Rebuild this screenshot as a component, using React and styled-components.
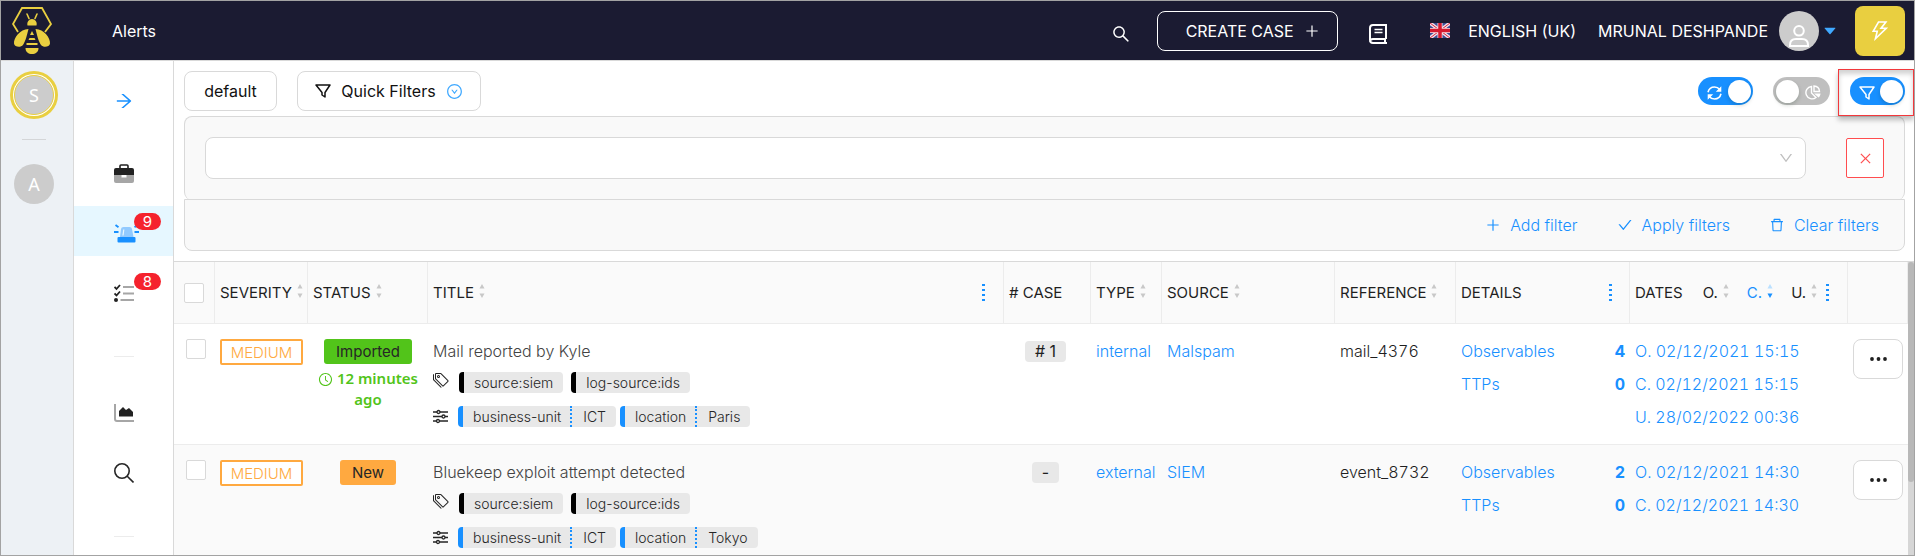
import React from "react";
import styled, { createGlobalStyle, css } from "styled-components";
import {
  AiOutlineSearch,
  AiOutlinePlus,
  AiOutlineThunderbolt,
  AiOutlineArrowRight,
  AiOutlineDownCircle,
  AiOutlineDown,
  AiOutlineClose,
  AiOutlineCheck,
  AiOutlineDelete,
  AiOutlineClockCircle,
  AiFillCaretDown,
} from "react-icons/ai";
import { BsTags } from "react-icons/bs";

const c = {
  navy: "#1b1b32",
  blue: "#1890ff",
  line: "#d9d9d9",
  soft: "#ececec",
  yellow: "#e9cf40",
  orange: "#ffa940",
  green: "#52c41a",
  red: "#ff4d4f",
  ink: "#1f1f1f",
  pale: "#fafafa",
};

const GlobalStyle = createGlobalStyle`
  *, *::before, *::after { box-sizing: border-box; }
  body { margin: 0; background: #fff; }
  body, button, select, input {
    font-family: Inter, "Liberation Sans", sans-serif;
    font-size: 16px;
    color: ${c.ink};
  }
  button { background: none; border: 0; padding: 0; cursor: pointer; }
  a { text-decoration: none; color: ${c.blue}; }
  svg { display: block; flex: none; }
`;

/* ---------- shell ---------- */

const Page = styled.div`
  height: 100vh;
  border: 1px solid #a3a3a3;
  display: flex;
  flex-direction: column;
  overflow: hidden;
`;

const Header = styled.header`
  flex: none;
  height: 60px;
  background: ${c.navy};
  border-bottom: 1px solid ${c.line};
  display: flex;
  align-items: center;
  padding: 0 9px 0 11px;
  color: #fff;
`;

const PageTitle = styled.h1`
  margin: 0 auto 0 60px;
  font-size: 16px;
  font-weight: 400;
`;

const IconButton = styled.button`
  color: #fff;
  display: flex;
  padding-top: 6px;
`;

const CreateCase = styled.button`
  width: 181px;
  height: 40px;
  margin: 0 31px 0 26px;
  border: 1px solid #fff;
  border-radius: 8px;
  color: #fff;
  display: flex;
  align-items: center;
  justify-content: center;
  gap: 10px;
  padding-left: 10px;
`;

const Language = styled.button`
  color: #fff;
  display: flex;
  align-items: center;
  gap: 18px;
  margin: 0 22px 0 43px;
`;

const UserMenu = styled.button`
  color: #fff;
  display: flex;
  align-items: center;
`;

const UserAvatar = styled.span`
  width: 40px;
  height: 40px;
  margin: 0 3px 0 11px;
  border-radius: 50%;
  background: #ccc;
  display: flex;
  align-items: flex-end;
  justify-content: center;
  padding-bottom: 4px;
`;

const BoltButton = styled.button`
  width: 50px;
  height: 50px;
  margin-left: 17px;
  border-radius: 8px;
  background: ${c.yellow};
  color: #fff;
  display: flex;
  align-items: center;
  justify-content: center;
`;

const Body = styled.div`
  flex: 1;
  min-height: 0;
  display: flex;
`;

const OrgRail = styled.aside`
  flex: none;
  width: 73px;
  background: #edf1f5;
  border-right: 1px solid ${c.line};
  padding: 10px 6px 0 0;
  display: flex;
  flex-direction: column;
  align-items: center;
`;

const Avatar = styled.button`
  width: 40px;
  height: 40px;
  border-radius: 50%;
  background: #ccc;
  color: #fff;
  font-family: "Noto Sans", sans-serif;
  font-size: 18px;
  ${(p) =>
    p.$active &&
    css`
      margin: 4px 0;
      border: 1px solid ${c.yellow};
      box-shadow: 0 0 0 1px #fff, 0 0 0 4px ${c.yellow};
    `}
`;

const Divider = styled.hr`
  flex: none;
  width: ${(p) => p.$width}px;
  height: 1px;
  border: 0;
  background: ${(p) => p.$color};
  margin: ${(p) => p.$margin};
`;

const NavRail = styled.nav`
  flex: none;
  width: 100px;
  border-right: 1px solid ${c.line};
  display: flex;
  flex-direction: column;
`;

const Expand = styled.button`
  flex: none;
  color: ${c.blue};
  display: flex;
  padding: 30px 0 35px 40px;
`;

const NavItem = styled.a`
  flex: none;
  position: relative;
  height: 50px;
  margin-bottom: 10px;
  padding: 4px 0 0 40px;
  display: flex;
  align-items: center;
  background: ${(p) => (p.$active ? "#e6f7ff" : "transparent")};
  color: ${(p) => (p.$active ? c.blue : "#262626")};
`;

const Badge = styled.span`
  position: absolute;
  top: 7px;
  left: 60px;
  width: 27px;
  height: 17px;
  border-radius: 9px;
  background: #f5222d;
  color: #fff;
  font-size: 15px;
  line-height: 17px;
  text-align: center;
`;

const Main = styled.main`
  flex: 1;
  min-width: 0;
  display: flex;
  flex-direction: column;
`;

/* ---------- toolbar and filters ---------- */

const Toolbar = styled.div`
  flex: none;
  display: flex;
  align-items: center;
  gap: 20px;
  padding: 10px 9px 5px 10px;
`;

const OutlineButton = styled.button`
  width: ${(p) => p.$width}px;
  height: 40px;
  border: 1px solid ${c.line};
  border-radius: 8px;
  background: #fff;
  color: #111;
  display: flex;
  align-items: center;
  justify-content: center;
  gap: 10px;
`;

const Spacer = styled.div`
  flex: 1;
`;

const SwitchLabel = styled.label`
  position: relative;
  width: ${(p) => (p.$on ? 55 : 57)}px;
  height: 28px;
  border-radius: 14px;
  background: ${(p) => (p.$on ? c.blue : "#bfbfbf")};
  color: #fff;
  display: flex;
  align-items: center;
  justify-content: space-between;
  flex-direction: ${(p) => (p.$on ? "row" : "row-reverse")};
  padding: ${(p) => (p.$on ? "0 2px 0 9px" : "0 9px 0 3px")};
  cursor: pointer;
  > svg {
    margin-top: 3px;
  }
`;

const SwitchInput = styled.input`
  appearance: none;
  margin: 0;
  width: 23px;
  height: 23px;
  border-radius: 50%;
  background: #fff;
  box-shadow: 0 2px 4px rgba(0, 35, 11, 0.2);
`;

const Highlight = styled.span`
  position: absolute;
  inset: -8px -9px -11px -12px;
  border: 1px solid #f2383c;
  box-shadow: 0 4px 5px rgba(0, 0, 0, 0.25), inset 0 4px 5px rgba(0, 0, 0, 0.18);
  pointer-events: none;
`;

const FilterPanel = styled.section`
  flex: none;
  height: 84px;
  margin: 0 9px 0 10px;
  border: 1px solid ${c.line};
  border-bottom: 0;
  border-radius: 8px;
  background: #f9f9f9;
  display: flex;
  align-items: center;
  gap: 40px;
  padding: 0 20px 1px;
`;

const SelectBox = styled.div`
  flex: 1;
  display: grid;
  align-items: center;
  color: #bfbfbf;
  > * {
    grid-area: 1 / 1;
  }
  > svg {
    justify-self: end;
    margin-right: 12px;
    pointer-events: none;
  }
`;

const Select = styled.select`
  appearance: none;
  width: 100%;
  height: 42px;
  border: 1px solid ${c.line};
  border-radius: 8px;
  background: #fff;
  padding: 0 40px 0 12px;
`;

const RemoveButton = styled.button`
  width: 38px;
  height: 40px;
  border: 1px solid ${c.red};
  border-radius: 2px;
  background: #fff;
  color: ${c.red};
  display: flex;
  align-items: center;
  justify-content: center;
`;

const FilterActions = styled.div`
  flex: none;
  height: 52px;
  margin: -1px 9px 10px 10px;
  border: 1px solid ${c.line};
  border-radius: 0 0 8px 8px;
  background: #f9f9f9;
  display: flex;
  align-items: center;
  justify-content: flex-end;
  gap: 39px;
  padding-right: 25px;
`;

const TextButton = styled.button`
  color: ${c.blue};
  font-weight: 300;
  display: flex;
  align-items: center;
  gap: 9px;
`;

/* ---------- table ---------- */

const TableArea = styled.div`
  flex: 1;
  min-height: 0;
  display: flex;
  align-items: stretch;
  border-top: 1px solid ${c.line};
`;

const TableClip = styled.div`
  flex: 1;
  min-width: 0;
  overflow: hidden;
`;

const ScrollTrack = styled.div`
  flex: none;
  width: 6px;
  background: #d6d6d6;
`;

const ScrollThumb = styled.div`
  height: 75%;
  border-radius: 3px;
  background: #b8b8b8;
`;

const Table = styled.table`
  width: 100%;
  table-layout: fixed;
  border-collapse: separate;
  border-spacing: 0;
`;

const Col = styled.col`
  width: ${(p) => (p.$width ? `${p.$width}px` : "auto")};
`;

const Th = styled.th`
  height: 62px;
  padding: 0 5px;
  background: ${c.pale};
  border-right: 1px solid ${c.soft};
  border-bottom: 1px solid ${c.soft};
  font-size: 15px;
  font-weight: 400;
  text-align: left;
  white-space: nowrap;
`;

const HeadRow = styled.div`
  display: flex;
  align-items: center;
  gap: 5px;
  padding-right: ${(p) => p.$right || 0}px;
  > :last-child {
    margin-left: ${(p) => (p.$spread ? "auto" : "0")};
  }
`;

const SortKeys = styled.div`
  display: flex;
  gap: 18px;
  margin-left: 15px;
`;

const SortKey = styled.button`
  display: flex;
  align-items: center;
  gap: 5px;
  font-size: 15px;
  color: ${(p) => (p.$active ? c.blue : c.ink)};
`;

const Row = styled.tr`
  background: ${(p) => (p.$odd ? c.pale : "#fff")};
`;

const Td = styled.td`
  height: 121px;
  padding: 15px 5px 0;
  vertical-align: top;
  border-bottom: 1px solid ${c.soft};
  text-align: ${(p) => p.$align || "left"};
  white-space: nowrap;
`;

const Checkbox = styled.input`
  appearance: none;
  display: block;
  width: 20px;
  height: 20px;
  margin: 0 0 0 ${(p) => (p.$head ? 5 : 7)}px;
  border: 1px solid ${c.line};
  border-radius: 2px;
  background: #fff;
`;

const Severity = styled.span`
  display: flex;
  align-items: center;
  justify-content: center;
  height: 26px;
  width: 83px;
  border: 2px solid ${c.orange};
  border-radius: 2px;
  color: ${c.orange};
  background: #fff;
  font-size: 15px;
  font-weight: 300;
`;

const StatusCell = styled.div`
  display: flex;
  flex-direction: column;
  align-items: center;
  gap: 4px;
`;

const Status = styled.span`
  height: 25px;
  line-height: 25px;
  padding: 0 12px;
  border-radius: 3px;
  background: ${(p) => (p.$imported ? c.green : c.orange)};
  font-size: 15px;
  color: #262626;
`;

const Ago = styled.span`
  color: ${c.green};
  font-family: "Noto Sans", sans-serif;
  font-size: 15px;
  line-height: 21px;
  font-weight: 600;
  text-align: center;
  white-space: normal;
  svg {
    display: inline-block;
    vertical-align: -3px;
  }
`;

const Line = styled.div`
  height: 33px;
  line-height: 25px;
  font-weight: 300;
  font-variant-numeric: tabular-nums;
  display: flex;
  justify-content: space-between;
  color: ${(p) => p.$color || c.blue};
  b {
    font-weight: 700;
  }
`;

const Title = styled.a`
  display: block;
  line-height: 25px;
  margin-bottom: 8px;
  font-weight: 300;
  color: #434343;
`;

const TagRow = styled.div`
  display: flex;
  align-items: flex-start;
  gap: ${(p) => p.$gap}px;
  height: 34px;
  > svg {
    margin-right: ${(p) => 10 - p.$gap}px;
  }
`;

const Tag = styled.span`
  display: inline-flex;
  height: 21px;
  line-height: 21px;
  border-left: 5px solid ${(p) => p.$color};
  border-radius: 4px;
  background: #e8e8e8;
  font-size: 14px;
  font-weight: 300;
  color: #262626;
  padding: 0 10px;
`;

const TagName = styled.span`
  padding-right: 9px;
  margin-right: 11px;
  border-right: 2px dotted ${c.blue};
`;

const CaseTag = styled.span`
  display: inline-block;
  height: 21px;
  line-height: 21px;
  margin: 2px 4px 0 0;
  padding: 0 10px;
  border-radius: 4px;
  background: #e8e8e8;
`;

const MoreButton = styled.button`
  width: 50px;
  height: 40px;
  border: 1px solid ${c.line};
  border-radius: 8px;
  background: #fff;
  display: flex;
  align-items: center;
  justify-content: center;
`;

/* ---------- drawings ---------- */

const Logo = () => (
  <svg width="40" height="48" viewBox="0 0 40 48" fill={c.yellow} role="img" aria-label="TheHive">
    <path d="M6 25L1 17 10 1h20l9 16-6 8" fill="none" stroke={c.yellow} strokeWidth="1.800" />
    <path d="M15 7l2 4.500M25 7l-2 4.500" stroke={c.yellow} strokeWidth="1.600" strokeLinecap="round" />
    <path d="M15.500 18.500C14.500 15 17 12 20 12s5.500 3 4.500 6.500z" />
    <path d="M16.500 22C8 22 1.500 31 2 36.500c.5 3.500 6.500 4.500 9 1.500 2.500-3.500 4-10 5.500-16zM23.500 22c8.500 0 15 9 14.500 14.500-.5 3.500-6.500 4.500-9 1.500-2.500-3.500-4-10-5.500-16z" />
    <path d="M20 24l2 4h-4zM17.500 31h5l1 2h-7zM14.500 36h11v2h-11zM13.500 41h13c0 4-3 6-6.500 6s-6.500-2-6.500-6z" />
  </svg>
);

const Book = () => (
  <svg width="18" height="20" viewBox="0 0 18 20" fill="none" stroke="#fff" strokeWidth="2">
    <path d="M17 15V1H4Q1 1 1 4v12q0 3 3 3h14M1 17.500q0-2.500 3-2.500h13M16 15v4" />
    <path d="M5.500 5.500h8M5.500 8.500h8" strokeWidth="1.700" />
  </svg>
);

const Flag = () => (
  <svg width="20" height="15" viewBox="0 0 20 15" aria-hidden="true">
    <path fill="#3d4d95" d="M0 0h20v15H0z" />
    <path d="M0 0l20 15M20 0L0 15" stroke="#f4dfe6" strokeWidth="3.500" />
    <path d="M0 0l20 15M20 0L0 15" stroke="#d5243f" strokeWidth="1" />
    <path d="M10 0v15M0 7.500h20" stroke="#f4dfe6" strokeWidth="5" />
    <path d="M10 0v15M0 7.500h20" stroke="#d5182f" strokeWidth="3.500" />
  </svg>
);

const Person = () => (
  <svg width="20" height="22" viewBox="0 0 20 22" fill="none" stroke="#fff" strokeWidth="2">
    <circle cx="10" cy="5.800" r="4.800" />
    <path d="M1 21v-1q0-6 6-6h6q6 0 6 6v1z" />
  </svg>
);

const Funnel = () => (
  <svg width="16" height="14" viewBox="0 0 16 14" fill="none" stroke="currentColor" strokeWidth="1.500" strokeLinejoin="round">
    <path d="M1 1h14l-5 7.500V13l-3-2V8.500z" />
  </svg>
);

const Refresh = () => (
  <svg width="15" height="14" viewBox="0 0 15 14" fill="none" stroke="currentColor" strokeWidth="1.600">
    <path d="M1 6.200C1.800 3 4.500 1 7.500 1c2.200 0 4 1 5.200 2.600M14 7.800C13.200 11 10.500 13 7.500 13c-2.200 0-4-1-5.200-2.600" />
    <path d="M14.300.3v5.500H8.800zM.7 13.700V8.200h5.500z" fill="currentColor" stroke="none" />
  </svg>
);

const PieChart = () => (
  <svg width="16" height="15" viewBox="0 0 16 15" fill="none" stroke="currentColor" strokeWidth="1.400">
    <path d="M6.500 1.500A6.200 6.200 0 1 0 11 12.500L6.500 8z" />
    <path d="M9 1v5.500h5.500C14.300 3.500 12 1.200 9 1z" />
    <path d="M9 8.500h6.500c0 1.500-.8 3-2 4z" fill="currentColor" stroke="none" />
  </svg>
);

const Briefcase = () => (
  <svg width="20" height="19" viewBox="0 0 20 19">
    <path d="M6 4V2q0-1 1-1h6q1 0 1 1v2" fill="none" stroke="#222" strokeWidth="1.600" />
    <path d="M0 6q0-2 2-2h16q2 0 2 2v5H0z" fill="#222" />
    <path d="M0 11h20v6q0 2-2 2H2q-2 0-2-2z" fill="#a6a6a6" />
    <path d="M7.500 11h5v2.500h-5z" fill="#fff" />
  </svg>
);

const Siren = () => (
  <svg width="25" height="19" viewBox="0 0 25 19">
    <path d="M6 13L7 5Q7.300 3 9.500 3h6q2.200 0 2.500 2l1.500 8z" fill="#91caff" />
    <path d="M9 11.500l.8-6" stroke="#e6f7ff" strokeWidth="1.200" />
    <rect x="3.500" y="13" width="18" height="5.500" rx="1" fill={c.blue} />
    <path d="M1.500 1l3 2.200M23.500 1l-3 2.200M0 8h4.500M20.500 8H25" stroke={c.blue} strokeWidth="1.800" />
  </svg>
);

const Tasks = () => (
  <svg width="20" height="18" viewBox="0 0 20 18" fill="none">
    <path d="M.5 3l2 2L6 1M.5 9.500l2 2L6 7.500" stroke="#222" strokeWidth="1.800" />
    <circle cx="2" cy="16" r="2" fill="#222" />
    <path d="M9 3h11M9 9.500h11M6.500 16H20" stroke="#a6a6a6" strokeWidth="2" />
  </svg>
);

const AreaChart = () => (
  <svg width="20" height="18" viewBox="0 0 20 18">
    <path d="M1 0v15q0 2 2 2h17" fill="none" stroke="#a6a6a6" strokeWidth="2" />
    <path d="M5 12.500V7l4-4 3 3 3-2 4 4v4.500z" fill="#222" />
  </svg>
);

const Magnifier = () => (
  <svg width="20" height="20" viewBox="0 0 20 20" fill="none" stroke="currentColor" strokeWidth="1.600">
    <circle cx="8" cy="8" r="7.200" />
    <path d="M13 13l6.500 6.500" />
  </svg>
);

const Sliders = () => (
  <svg width="15" height="20" viewBox="0 0 15 20" fill="#fff" stroke="#262626" strokeWidth="1.300">
    <path d="M0 6h15M0 10.500h15M0 15h15" />
    <circle cx="5.500" cy="6" r="1.500" />
    <circle cx="10.500" cy="10.500" r="1.500" />
    <circle cx="5" cy="15" r="1.500" />
  </svg>
);

const SortArrows = ({ active }) => (
  <svg width="6" height="20" viewBox="0 0 6 20" aria-hidden="true">
    <path d="M3 1l2.500 4.500h-5z" fill={active ? "#bae0ff" : "#c8c8c8"} />
    <path d="M3 15l2.500-4.500h-5z" fill={active ? c.blue : "#c8c8c8"} />
  </svg>
);

const Dots = () => (
  <svg width="3" height="18" viewBox="0 0 3 18" fill={c.blue} aria-hidden="true">
    <path d="M0 0h3v2H0zM0 5h3v2H0zM0 10h3v2H0zM0 15h3v2H0z" />
  </svg>
);

const Ellipsis = () => (
  <svg width="17" height="4" viewBox="0 0 17 4" fill="#1f1f1f">
    <circle cx="2" cy="2" r="1.900" />
    <circle cx="8.500" cy="2" r="1.900" />
    <circle cx="15" cy="2" r="1.900" />
  </svg>
);

/* ---------- pieces ---------- */

const Switch = ({ on, label, icon, marked }) => (
  <SwitchLabel $on={on}>
    {icon}
    <SwitchInput type="checkbox" role="switch" defaultChecked={on} aria-label={label} />
    {marked && <Highlight />}
  </SwitchLabel>
);

const Heading = ({ children, sortable, dots, right }) => (
  <Th>
    <HeadRow $spread={dots} $right={right}>
      <span>{children}</span>
      {sortable && <SortArrows />}
      {dots && <Dots />}
    </HeadRow>
  </Th>
);

const alerts = [
  {
    title: "Mail reported by Kyle",
    status: "Imported",
    ago: "12 minutes ago",
    caseNo: "# 1",
    type: "internal",
    source: "Malspam",
    reference: "mail_4376",
    location: "Paris",
    observables: 4,
    dates: ["O. 02/12/2021 15:15", "C. 02/12/2021 15:15", "U. 28/02/2022 00:36"],
  },
  {
    title: "Bluekeep exploit attempt detected",
    status: "New",
    caseNo: "-",
    type: "external",
    source: "SIEM",
    reference: "event_8732",
    location: "Tokyo",
    observables: 2,
    dates: ["O. 02/12/2021 14:30", "C. 02/12/2021 14:30"],
  },
];

const widths = [41, 93, 120, null, 87, 71, 173, 121, 174, 218, 60];

const AlertRow = ({ alert, odd }) => (
  <Row $odd={odd}>
    <Td><Checkbox type="checkbox" aria-label={`Select ${alert.title}`} /></Td>
    <Td><Severity>MEDIUM</Severity></Td>
    <Td>
      <StatusCell>
        <Status $imported={alert.status === "Imported"}>{alert.status}</Status>
        {alert.ago && <Ago><AiOutlineClockCircle size={15} /> {alert.ago}</Ago>}
      </StatusCell>
    </Td>
    <Td>
      <Title href="#alert">{alert.title}</Title>
      <TagRow $gap={8}>
        <BsTags size={16} color="#262626" />
        <Tag $color="#000">source:siem</Tag>
        <Tag $color="#000">log-source:ids</Tag>
      </TagRow>
      <TagRow $gap={4}>
        <Sliders />
        <Tag $color={c.blue}><TagName>business-unit</TagName>ICT</Tag>
        <Tag $color={c.blue}><TagName>location</TagName>{alert.location}</Tag>
      </TagRow>
    </Td>
    <Td $align="center"><CaseTag>{alert.caseNo}</CaseTag></Td>
    <Td><Line as="a" href="#type">{alert.type}</Line></Td>
    <Td><Line as="a" href="#source">{alert.source}</Line></Td>
    <Td><Line $color={c.ink}>{alert.reference}</Line></Td>
    <Td>
      <Line><a href="#observables">Observables</a><b>{alert.observables}</b></Line>
      <Line><a href="#ttps">TTPs</a><b>0</b></Line>
    </Td>
    <Td>
      {alert.dates.map((date) => <Line key={date}>{date}</Line>)}
    </Td>
    <Td><MoreButton aria-label="More actions"><Ellipsis /></MoreButton></Td>
  </Row>
);

export default function App() {
  return (
    <Page>
      <GlobalStyle />
      <Header>
        <Logo />
        <PageTitle>Alerts</PageTitle>
        <IconButton aria-label="Search"><AiOutlineSearch size={20} /></IconButton>
        <CreateCase>CREATE CASE <AiOutlinePlus size={16} /></CreateCase>
        <IconButton aria-label="Documentation"><Book /></IconButton>
        <Language><Flag /> ENGLISH (UK)</Language>
        <UserMenu>
          MRUNAL DESHPANDE
          <UserAvatar><Person /></UserAvatar>
          <AiFillCaretDown size={16} color="#40a9ff" />
        </UserMenu>
        <BoltButton aria-label="Quick actions"><AiOutlineThunderbolt size={24} /></BoltButton>
      </Header>
      <Body>
        <OrgRail>
          <Avatar $active>S</Avatar>
          <Divider $width={24} $color="#d4d6d8" $margin="20px 0 24px" />
          <Avatar>A</Avatar>
        </OrgRail>
        <NavRail>
          <Expand aria-label="Expand menu"><AiOutlineArrowRight size={20} /></Expand>
          <NavItem href="#cases" aria-label="Cases"><Briefcase /></NavItem>
          <NavItem href="#alerts" aria-label="Alerts" $active><Siren /><Badge>9</Badge></NavItem>
          <NavItem href="#tasks" aria-label="Tasks"><Tasks /><Badge>8</Badge></NavItem>
          <Divider $width={20} $color={c.soft} $margin="30px 0 29px 40px" />
          <NavItem href="#dashboards" aria-label="Dashboards"><AreaChart /></NavItem>
          <NavItem href="#search" aria-label="Search"><Magnifier /></NavItem>
          <Divider $width={20} $color={c.soft} $margin="30px 0 29px 40px" />
        </NavRail>
        <Main>
          <Toolbar>
            <OutlineButton $width={93}>default</OutlineButton>
            <OutlineButton $width={184}>
              <Funnel /> Quick Filters <AiOutlineDownCircle size={17} color="#40a9ff" />
            </OutlineButton>
            <Spacer />
            <Switch on label="Auto refresh" icon={<Refresh />} />
            <Switch label="Show charts" icon={<PieChart />} />
            <Switch on marked label="Show filters" icon={<Funnel />} />
          </Toolbar>
          <FilterPanel>
            <SelectBox>
              <Select aria-label="Filter field" defaultValue=""><option value="" /></Select>
              <AiOutlineDown size={16} />
            </SelectBox>
            <RemoveButton aria-label="Remove filter"><AiOutlineClose size={15} /></RemoveButton>
          </FilterPanel>
          <FilterActions>
            <TextButton><AiOutlinePlus size={16} /> Add filter</TextButton>
            <TextButton><AiOutlineCheck size={16} /> Apply filters</TextButton>
            <TextButton><AiOutlineDelete size={16} /> Clear filters</TextButton>
          </FilterActions>
          <TableArea>
            <TableClip>
              <Table>
                <colgroup>{widths.map((w, i) => <Col key={i} $width={w} />)}</colgroup>
                <thead>
                  <tr>
                    <Th><Checkbox $head type="checkbox" aria-label="Select all" /></Th>
                    <Heading sortable>SEVERITY</Heading>
                    <Heading sortable>STATUS</Heading>
                    <Heading dots right={13} sortable>TITLE</Heading>
                    <Heading># CASE</Heading>
                    <Heading sortable>TYPE</Heading>
                    <Heading sortable>SOURCE</Heading>
                    <Heading sortable>REFERENCE</Heading>
                    <Heading dots right={12}>DETAILS</Heading>
                    <Th>
                      <HeadRow $right={13} $spread>
                        <span>DATES</span>
                        <SortKeys>
                          <SortKey>O. <SortArrows /></SortKey>
                          <SortKey $active>C. <SortArrows active /></SortKey>
                          <SortKey>U. <SortArrows /></SortKey>
                        </SortKeys>
                        <Dots />
                      </HeadRow>
                    </Th>
                    <Th aria-label="Actions" />
                  </tr>
                </thead>
                <tbody>
                  {alerts.map((alert, i) => <AlertRow key={alert.title} alert={alert} odd={i % 2 === 1} />)}
                </tbody>
              </Table>
            </TableClip>
            <ScrollTrack aria-hidden="true"><ScrollThumb /></ScrollTrack>
          </TableArea>
        </Main>
      </Body>
    </Page>
  );
}
